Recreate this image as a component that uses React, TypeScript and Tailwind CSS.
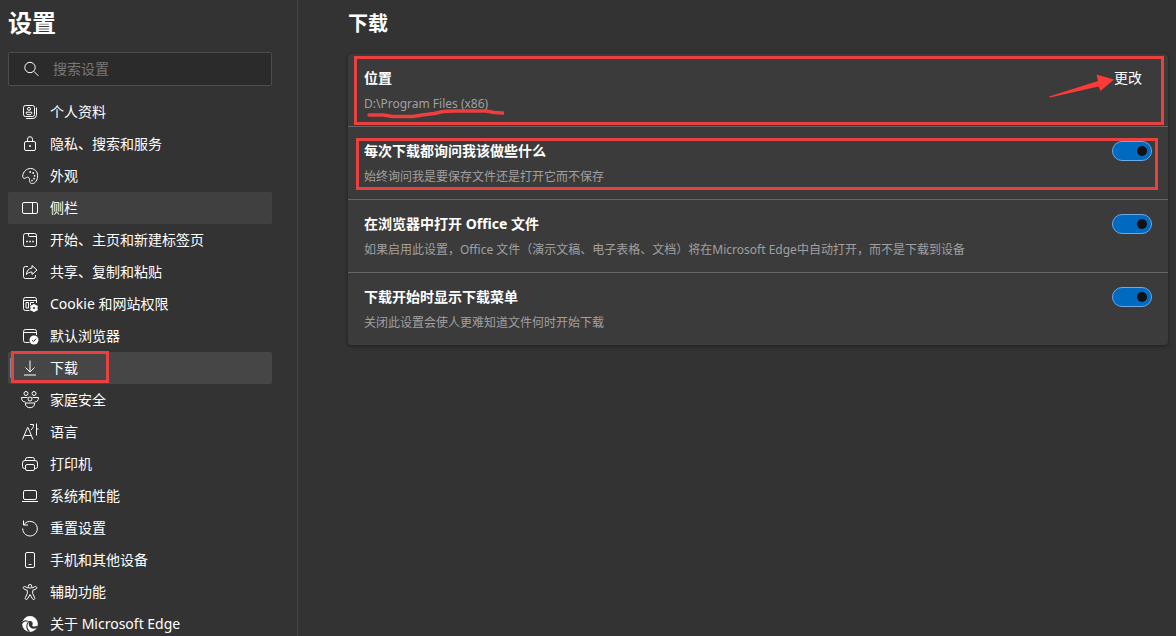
import React, { useState } from 'react';

// --- ICONS (16px grid) ---
const icons: Record<string, React.ReactNode> = {
  profile: (
    <>
      <rect x="1.5" y="1.5" width="11" height="11" rx="2" />
      <circle cx="7" cy="4.9" r="1.5" />
      <path d="M4.2 8.2h5.6v.8c0 1.1-1.2 1.8-2.8 1.8S4.2 10.1 4.2 9z" />
      <path d="M14.5 3.6v7.2a3.7 3.7 0 0 1-3.7 3.7H4.2" />
    </>
  ),
  lock: (
    <>
      <rect x="2.5" y="5.5" width="11" height="9" rx="1.5" />
      <path d="M5.5 5.5V3.2a2.5 2.5 0 0 1 5 0v2.3" />
      <circle cx="8" cy="10" r="1" fill="currentColor" stroke="none" />
    </>
  ),
  palette: (
    <>
      <path d="M.7 8.2C1 3.6 4.6.5 8.6.5c4.2 0 7 3.2 7 7.2 0 4.3-2.3 7.8-5.2 7.8-3 0-2.8-2.2-2.9-3.8 0-1.7-.9-2.6-2.1-2.5-1.6.1-1.9 1.500-3.200 1.100C1.200 10 .6 9.300.7 8.200z" />
      <g fill="currentColor" stroke="none">
        <circle cx="8.200" cy="4" r=".9" />
        <circle cx="11.200" cy="5" r=".9" />
        <circle cx="12.600" cy="7.800" r=".9" />
        <circle cx="12" cy="10.600" r=".9" />
        <circle cx="10" cy="12.600" r=".8" />
      </g>
    </>
  ),
  sidebar: (
    <>
      <rect x=".5" y="2.5" width="15" height="11" rx="1.5" />
      <path d="M10.500 2.500v11" />
    </>
  ),
  start: (
    <>
      <rect x="1.5" y="1.5" width="13" height="13" rx="2" />
      <path d="M6.500 1.500v2.200c0 .6.300.8.800.8h7.200" />
      <path d="M4.200 9.500h1.600M7.200 9.500h1.600M10.200 9.500h1.600" strokeWidth="1.6" />
    </>
  ),
  share: (
    <>
      <path d="M6 2.500H3.500a2 2 0 0 0-2 2v8a2 2 0 0 0 2 2h8a2 2 0 0 0 2-2v-1.500" />
      <path d="M10 1.500l5 4.500-5 4.500V8c-2.500 0-4.300.8-5.600 2.600C4.700 6.800 6.600 4.400 10 4z" />
    </>
  ),
  cookie: (
    <>
      <path d="M7.500 14.500h-4a2 2 0 0 1-2-2v-9a2 2 0 0 1 2-2h9a2 2 0 0 1 2 2V7M1.500 4.500h13M4 6.500h2.500v5.500H4zM8.500 9V6.500H12" />
      <circle cx="12" cy="12" r="2.600" strokeWidth="2" />
      <path d="M12 7.900v8.200M8.400 9.900l7.200 4.200M8.400 14.100l7.200-4.200" strokeWidth="1.5" />
      <circle cx="12" cy="12" r="1" fill="#333333" stroke="none" />
    </>
  ),
  browser: (
    <>
      <path d="M7.500 14.500h-4a2 2 0 0 1-2-2v-9a2 2 0 0 1 2-2h9a2 2 0 0 1 2 2V7M1.500 4.500h13" />
      <circle cx="12" cy="12" r="4.500" fill="currentColor" stroke="none" />
      <path d="M10 12.200l1.500 1.400 2.700-3" stroke="#333333" />
    </>
  ),
  download: <path d="M8 .5v11M3.500 7.500L8 12l4.500-4.500M2 15h12" />,
  family: (
    <>
      <circle cx="4" cy="1.500" r="2" />
      <circle cx="12" cy="1.500" r="2" />
      <circle cx="8" cy="7" r="2" />
      <path d="M5.500 5.500H-.500C-.500 8.500 1 10 3.500 10M10.500 5.500h6c0 3-1.500 4.500-4 4.500" />
      <path d="M3.500 11h9v1c0 2.200-2 3.700-4.500 3.700S3.500 14.200 3.500 12z" />
    </>
  ),
  language: (
    <>
      <path d="M.500 15.500L5.500 3.500h.5l5 12M2.400 11.500h6.700" />
      <path d="M8 .500h3.500c0 2.700-.8 4-2.500 5.500M14.500-.500v12M14.500 5H16.500" />
    </>
  ),
  printer: (
    <>
      <path d="M3.500 4.500v-1a2 2 0 0 1 2-2h5a2 2 0 0 1 2 2v1M3.500 12.500h-1a2 2 0 0 1-2-2V7A2.500 2.500 0 0 1 3 4.500h10A2.500 2.500 0 0 1 15.500 7v3.500a2 2 0 0 1-2 2h-1" />
      <rect x="3.5" y="8.5" width="9" height="6" rx="1.5" />
    </>
  ),
  laptop: (
    <>
      <rect x="1.5" y="2.5" width="13" height="9" rx="1.5" />
      <path d="M0 13.500h16" />
    </>
  ),
  reset: <path d="M1.500.500v4.500H6M1.700 5A7.300 7.300 0 1 1 .7 8.500" />,
  phone: (
    <>
      <rect x="3.5" y=".5" width="9" height="15" rx="1.5" />
      <path d="M6.500 12.500h3" />
    </>
  ),
  accessibility: (
    <>
      <circle cx="8" cy="2.300" r="1.800" />
      <path d="M6.200 4.200L3.300 2.700c-.8-.4-1.700-.1-2 .5-.3.700 0 1.400.7 1.700L5.300 6.500v3l-2 4.200c-.3.700 0 1.400.6 1.700.700.300 1.400 0 1.700-.6L8 10.500l2.400 4.300c.3.600 1 .9 1.700.6.600-.3.900-1 .6-1.700l-2-4.200v-3L14 4.900c.7-.3 1-1 .7-1.700-.3-.6-1.200-.9-2-.5L9.800 4.200" />
    </>
  ),
  edge: (
    <>
      <circle cx="8" cy="8" r="7.900" fill="currentColor" stroke="none" />
      <path
        d="M5.300 6.300C6.500 4.600 9.500 4.700 10.500 6.600c.6 1.300-.2 2.300-.3 3.100.6 1.100 3.600 1 5.600-.2l-.7 2.200c-2 1.300-4.600 1.300-6.100.3C6.800 10.700 6.300 8.300 7.200 6.600z"
        fill="#333333"
        stroke="none"
      />
      <path d="M0 7.500c1-2.200 3.400-3 5.700-2.200M6.300 6.400c-2.400 2.400-2 6.600 1.200 9.400" stroke="#333333" strokeWidth="1.2" />
    </>
  ),
  search: (
    <>
      <circle cx="7" cy="6.500" r="5.200" />
      <path d="M10.800 10.300l4.500 4.500" />
    </>
  ),
};

function Icon({ name }: { name: string }) {
  return (
    <svg
      viewBox="0 0 16 16"
      className="size-4 shrink-0 overflow-visible"
      fill="none"
      stroke="currentColor"
      strokeLinejoin="round"
      aria-hidden="true"
    >
      {icons[name]}
    </svg>
  );
}

const menu = [
  { icon: 'profile', label: '个人资料' },
  { icon: 'lock', label: '隐私、搜索和服务' },
  { icon: 'palette', label: '外观' },
  { icon: 'sidebar', label: '侧栏' },
  { icon: 'start', label: '开始、主页和新建标签页' },
  { icon: 'share', label: '共享、复制和粘贴' },
  { icon: 'cookie', label: 'Cookie 和网站权限' },
  { icon: 'browser', label: '默认浏览器' },
  { icon: 'download', label: '下载' },
  { icon: 'family', label: '家庭安全' },
  { icon: 'language', label: '语言' },
  { icon: 'printer', label: '打印机' },
  { icon: 'laptop', label: '系统和性能' },
  { icon: 'reset', label: '重置设置' },
  { icon: 'phone', label: '手机和其他设备' },
  { icon: 'accessibility', label: '辅助功能' },
  { icon: 'edge', label: '关于 Microsoft Edge' },
];

const options = [
  { id: 'ask', title: '每次下载都询问我该做些什么', text: '始终询问我是要保存文件还是打开它而不保存', marked: true },
  {
    id: 'office',
    title: '在浏览器中打开 Office 文件',
    text: '如果启用此设置，Office 文件（演示文稿、电子表格、文档）将在Microsoft Edge中自动打开，而不是下载到设备',
  },
  { id: 'menu', title: '下载开始时显示下载菜单', text: '关闭此设置会使人更难知道文件何时开始下载' },
];

export default function App() {
  const [active, setActive] = useState('下载');
  const [enabled, setEnabled] = useState<Record<string, boolean>>({ ask: true, office: true, menu: true });

  return (
    <div className="flex h-screen overflow-hidden bg-[#333333] text-sm text-white font-['Noto_Sans','Noto_Sans_CJK_SC',sans-serif]">
      {/* Sidebar */}
      <aside className="w-[298px] shrink-0 border-r border-[#434343] pt-2 pr-[25px] pl-2">
        <h1 className="mb-3.5 text-2xl leading-[30px] font-bold">设置</h1>

        <label className="mb-2.5 flex h-[34px] items-center gap-3.5 rounded-xs border border-[#4d4d4d] bg-[#2b2b2b] pl-3.5">
          <Icon name="search" />
          <input
            type="search"
            placeholder="搜索设置"
            aria-label="搜索设置"
            className="min-w-0 flex-1 bg-transparent outline-none placeholder:text-[#777777]"
          />
        </label>

        <nav>
          {menu.map((item) => (
            <a
              key={item.label}
              href="#"
              onClick={() => setActive(item.label)}
              className={`relative flex h-8 items-center gap-3 rounded-xs pl-3.5 ${
                item.label === active ? 'bg-[#464646]' : item.label === '侧栏' ? 'bg-[#404040]' : ''
              }`}
            >
              {item.label === active && <span className="absolute left-0.5 h-5 w-0.5 rounded bg-[#7a8a99]" />}
              <Icon name={item.icon} />
              {item.label}
              {item.label === '下载' && (
                <span className="pointer-events-none absolute -top-px left-[3px] h-8 w-[98px] border-3 border-[#e94040]" />
              )}
            </a>
          ))}
        </nav>
      </aside>

      {/* Content */}
      <main className="min-w-0 flex-1 pt-2.5 pr-2 pl-[50px]">
        <h2 className="mb-4 text-xl leading-7 font-bold">下载</h2>

        <div className="divide-y divide-[#666666] rounded-sm bg-[#3b3b3b] shadow-[0_1px_4px_rgba(0,0,0,0.4)]">
          <section className="relative flex items-start justify-between px-4 py-3">
            <div>
              <h3 className="leading-6 font-bold">位置</h3>
              <p className="mt-1 text-xs leading-5 text-[#a0a0a0]">D:\Program Files (x86)</p>
            </div>
            <button className="px-2.5 leading-6">更改</button>

            {/* Marks */}
            <span className="pointer-events-none absolute top-0.5 right-1 bottom-px left-1.5 border-3 border-[#e94040]" />
            <svg viewBox="0 0 140 12" className="pointer-events-none absolute top-[54px] left-4 h-3 w-[140px]" fill="none" aria-hidden="true">
              <path
                d="M5 7h14l10 1.500h20l9-1.500 12-1.500 9-2 10-.5h33l8 1.500 9 .5"
                stroke="#ee3e3e"
                strokeWidth="3.500"
                strokeLinecap="round"
                strokeLinejoin="round"
              />
            </svg>
            <svg viewBox="0 0 68 24" className="pointer-events-none absolute top-5 right-[52px] h-6 w-[68px]" aria-hidden="true">
              <path d="M1 22.500L50 7l-1.500-6.500 17.500 5L52.500 17l-2-4.500L2 23.500z" fill="#fc3a38" />
            </svg>
          </section>

          {options.map((opt) => (
            <section key={opt.id} className="relative flex items-start justify-between gap-4 px-4 py-3">
              <div className="min-w-0">
                <label htmlFor={opt.id} className="block leading-6 font-bold">
                  {opt.title}
                </label>
                <p className="mt-1 text-xs leading-5 text-[#a0a0a0]">{opt.text}</p>
              </div>
              <input
                id={opt.id}
                type="checkbox"
                role="switch"
                checked={enabled[opt.id]}
                onChange={(e) => setEnabled({ ...enabled, [opt.id]: e.target.checked })}
                className="mt-0.5 flex h-5 w-10 shrink-0 appearance-none items-center rounded-full border border-[#6ea8e6] bg-[#555555] px-1 before:size-2.5 before:rounded-full before:bg-[#111111] checked:justify-end checked:bg-[#0069c0]"
              />
              {opt.marked && (
                <span className="pointer-events-none absolute top-[11px] right-2.5 bottom-[9px] left-2 border-3 border-[#e94040]" />
              )}
            </section>
          ))}
        </div>
      </main>
    </div>
  );
}
